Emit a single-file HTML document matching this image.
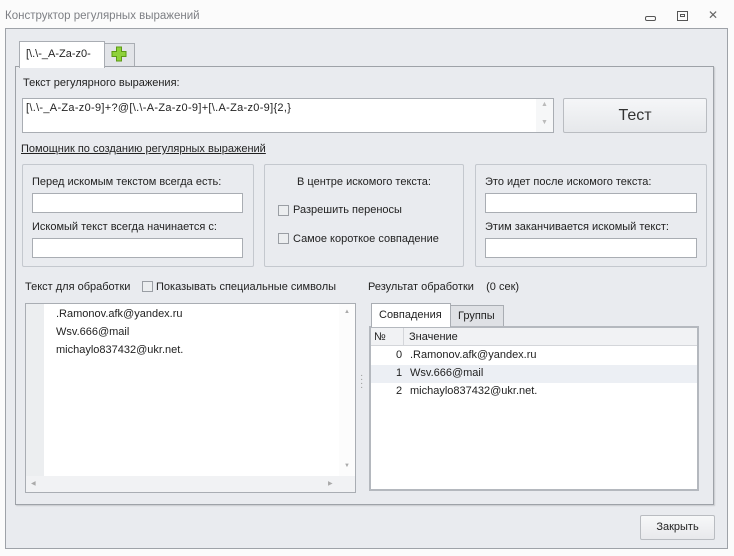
<!DOCTYPE html>
<html><head><meta charset="utf-8">
<style>
*{box-sizing:border-box;margin:0;padding:0}
body{width:734px;height:556px;background:#fbfbfb;font-family:"Liberation Sans",Tahoma,sans-serif;font-size:11px;color:#222;position:relative;overflow:hidden}
.a{position:absolute}
.box{position:absolute;background:#fff;border:1px solid #a9adb3}
.grp{position:absolute;border:1px solid #c4c8ce;border-radius:2px;background:#e9ebef}
.cb{position:absolute;width:11px;height:11px;border:1px solid #9a9ea4;background:#eceef0}
.t{position:absolute;white-space:nowrap}
</style></head><body>
<div class="t" style="left:5px;top:10px;color:#7d7f84;font-size:11.5px">Конструктор регулярных выражений</div>
<div class="a" style="left:645px;top:16px;width:11px;height:5px;border:1px solid #555;border-radius:2px"></div>
<div class="a" style="left:677px;top:11px;width:11px;height:10px;border:1px solid #555"></div>
<div class="a" style="left:680px;top:14px;width:5px;height:3px;border:1px solid #555"></div>
<div class="t" style="left:708px;top:8px;font-size:12px;color:#666">✕</div>

<div class="a" style="left:5px;top:28px;width:723px;height:521px;background:#e9ebef;border:1px solid #9ea2a8"></div>
<div class="a" style="left:19px;top:41px;width:86px;height:27px;background:#fff;border:1px solid #a9adb3;border-bottom:none;z-index:2"></div>
<div class="t" style="left:26px;top:48px;z-index:3">[\.\-_A-Za-z0-</div>
<div class="a" style="left:104px;top:43px;width:31px;height:24px;background:#e2e4e8;border:1px solid #a9adb3;border-bottom:none"></div>
<svg class="a" style="left:111px;top:46px" width="16" height="16" viewBox="0 0 16 16"><path d="M5.5 1h5v4.5H15v5h-4.5V15h-5v-4.5H1v-5h4.5z" fill="#8ed13a" stroke="#5c9a15" stroke-width="1"/></svg>
<div class="a" style="left:15px;top:66px;width:699px;height:439px;background:#e9ebef;border:1px solid #9ea2a8;box-shadow:1px 1px 1px #c8cacd"></div>

<div class="t" style="left:23px;top:77px">Текст регулярного выражения:</div>
<div class="box" style="left:22px;top:98px;width:532px;height:35px"></div>
<div class="a" style="left:536px;top:99px;width:17px;height:33px;background:#f6f7f8"></div>
<div class="t" style="left:541px;top:101px;color:#bbb;font-size:7px">▲</div>
<div class="t" style="left:541px;top:119px;color:#bbb;font-size:7px">▼</div>
<div class="t" style="left:26px;top:102px;letter-spacing:0.3px">[\.\-_A-Za-z0-9]+?@[\.\-A-Za-z0-9]+[\.A-Za-z0-9]{2,}</div>
<div class="a" style="left:563px;top:98px;width:144px;height:35px;border:1px solid #b9bcc1;border-radius:2px;background:linear-gradient(#f5f6f8,#e6e8eb)"></div>
<div class="t" style="left:563px;top:107px;width:144px;text-align:center;font-size:16px;color:#333">Тест</div>
<div class="t" style="left:21px;top:143px;text-decoration:underline">Помощник по созданию регулярных выражений</div>

<div class="grp" style="left:22px;top:164px;width:232px;height:103px"></div>
<div class="t" style="left:32px;top:176px">Перед искомым текстом всегда есть:</div>
<div class="box" style="left:32px;top:193px;width:211px;height:20px"></div>
<div class="t" style="left:32px;top:221px">Искомый текст всегда начинается с:</div>
<div class="box" style="left:32px;top:238px;width:211px;height:20px"></div>

<div class="grp" style="left:264px;top:164px;width:200px;height:103px"></div>
<div class="t" style="left:264px;top:176px;width:200px;text-align:center">В центре искомого текста:</div>
<div class="cb" style="left:278px;top:205px"></div>
<div class="t" style="left:293px;top:204px">Разрешить переносы</div>
<div class="cb" style="left:278px;top:233px"></div>
<div class="t" style="left:293px;top:233px">Самое короткое совпадение</div>

<div class="grp" style="left:475px;top:164px;width:232px;height:103px"></div>
<div class="t" style="left:485px;top:176px">Это идет после искомого текста:</div>
<div class="box" style="left:485px;top:193px;width:212px;height:20px"></div>
<div class="t" style="left:485px;top:221px">Этим заканчивается искомый текст:</div>
<div class="box" style="left:485px;top:238px;width:212px;height:20px"></div>

<div class="t" style="left:25px;top:281px">Текст для обработки</div>
<div class="cb" style="left:142px;top:281px"></div>
<div class="t" style="left:156px;top:281px">Показывать специальные символы</div>
<div class="box" style="left:25px;top:303px;width:331px;height:190px"></div>
<div class="a" style="left:26px;top:304px;width:18px;height:172px;background:#eceef0"></div>
<div class="a" style="left:26px;top:476px;width:329px;height:16px;background:#f1f2f4"></div>
<div class="a" style="left:339px;top:304px;width:16px;height:172px;background:#fcfcfc"></div>
<div class="t" style="left:56px;top:308px">.Ramonov.afk@yandex.ru</div>
<div class="t" style="left:56px;top:326px">Wsv.666@mail</div>
<div class="t" style="left:56px;top:344px">michaylo837432@ukr.net.</div>
<div class="t" style="left:344px;top:309px;color:#aaa;font-size:6px">▲</div>
<div class="t" style="left:344px;top:463px;color:#aaa;font-size:6px">▼</div>
<div class="t" style="left:31px;top:480px;color:#aaa;font-size:6px">◀</div>
<div class="t" style="left:328px;top:480px;color:#aaa;font-size:6px">▶</div>
<div class="t" style="left:360px;top:374px;color:#999;font-size:10px;line-height:4px">·<br>·<br>·<br>·</div>

<div class="t" style="left:368px;top:281px">Результат обработки &nbsp;&nbsp;&nbsp;(0 сек)</div>
<div class="a" style="left:371px;top:303px;width:80px;height:24px;background:#fff;border:1px solid #a9adb3;border-bottom:none;z-index:2"></div>
<div class="t" style="left:379px;top:309px;z-index:3">Совпадения</div>
<div class="a" style="left:450px;top:305px;width:54px;height:22px;background:#dfe1e5;border:1px solid #a9adb3;border-bottom:none"></div>
<div class="t" style="left:458px;top:310px">Группы</div>
<div class="box" style="left:369px;top:326px;width:330px;height:165px;border:2px solid #b4b8be"></div>
<div class="a" style="left:371px;top:328px;width:326px;height:18px;background:#f1f2f4;border-bottom:1px solid #d4d6da"></div>
<div class="a" style="left:403px;top:328px;width:1px;height:18px;background:#d4d6da"></div>
<div class="t" style="left:374px;top:331px">№</div>
<div class="t" style="left:409px;top:331px">Значение</div>
<div class="a" style="left:371px;top:365px;width:326px;height:18px;background:#eceff4"></div>
<div class="t" style="left:396px;top:349px">0</div><div class="t" style="left:410px;top:349px">.Ramonov.afk@yandex.ru</div>
<div class="t" style="left:396px;top:367px">1</div><div class="t" style="left:410px;top:367px">Wsv.666@mail</div>
<div class="t" style="left:396px;top:385px">2</div><div class="t" style="left:410px;top:385px">michaylo837432@ukr.net.</div>

<div class="a" style="left:640px;top:515px;width:75px;height:25px;border:1px solid #b9bcc1;border-radius:2px;background:linear-gradient(#f7f8f9,#e8e9ec)"></div>
<div class="t" style="left:640px;top:521px;width:75px;text-align:center">Закрыть</div>
</body></html>
